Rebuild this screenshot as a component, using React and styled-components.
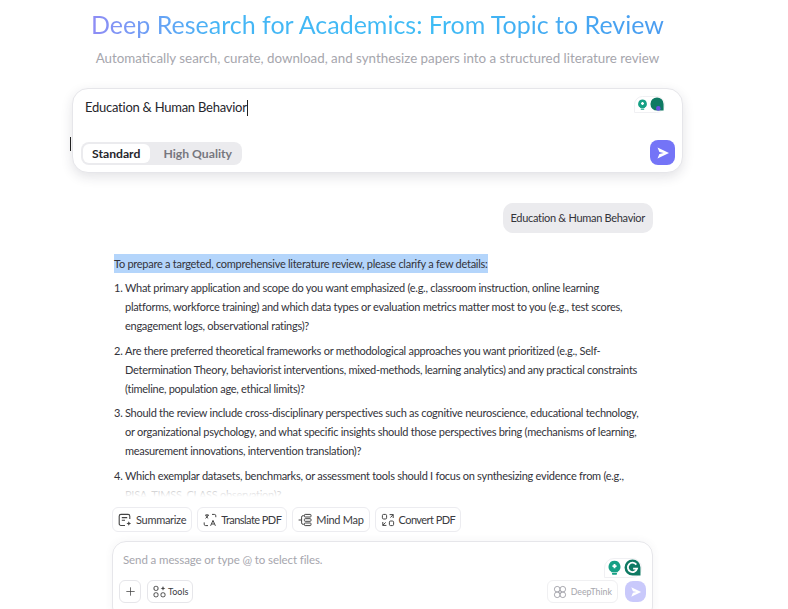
import React from 'react';
import styled, { createGlobalStyle } from 'styled-components';
import { Plus } from 'lucide-react';

const Global = createGlobalStyle`
  html, body { margin: 0; padding: 0; height: 100%; background: #fff; overflow: hidden; }
  body { font-family: Lato, "Open Sans", sans-serif; color: #2b2b33; }
`;

const questions = [
  [
    'What primary application and scope do you want emphasized (e.g., classroom instruction, online learning',
    'platforms, workforce training) and which data types or evaluation metrics matter most to you (e.g., test scores,',
    'engagement logs, observational ratings)?',
  ],
  [
    'Are there preferred theoretical frameworks or methodological approaches you want prioritized (e.g., Self-',
    'Determination Theory, behaviorist interventions, mixed-methods, learning analytics) and any practical constraints',
    '(timeline, population age, ethical limits)?',
  ],
  [
    'Should the review include cross-disciplinary perspectives such as cognitive neuroscience, educational technology,',
    'or organizational psychology, and what specific insights should those perspectives bring (mechanisms of learning,',
    'measurement innovations, intervention translation)?',
  ],
  [
    'Which exemplar datasets, benchmarks, or assessment tools should I focus on synthesizing evidence from (e.g.,',
    'PISA, TIMSS, CLASS observation)?',
  ],
];

const SendIcon = ({ size = 14 }) => (
  <svg width={size} height={size} viewBox="0 0 14 14">
    <path d="M1.5 1.6 L13 7 L1.5 12.4 L3.4 7.9 L7.6 7 L3.4 6.1 Z" fill="#fff" />
  </svg>
);

const BulbIcon = ({ size = 13 }) => (
  <svg width={size} height={size} viewBox="0 0 14 14">
    <path d="M7 .6a5.6 5.6 0 0 1 3 10.3v.5H4v-.5A5.6 5.6 0 0 1 7 .6Z" fill="#16a085" />
    <rect x="4.6" y="12" width="4.8" height="1.7" rx=".85" fill="#16a085" />
    <path d="M7 3.8v3.8M5.1 5.7h3.8" stroke="#fff" strokeWidth="1.7" />
  </svg>
);

const GrammarlyIcon = ({ size = 15, $plain }) => (
  <svg width={size} height={size} viewBox="0 0 16 16">
    <path d="M8 .5a7.5 7.5 0 0 1 7.5 7.5v7.5H8A7.5 7.5 0 0 1 8 .5Z" fill="#0f7a63" />
    {$plain
      ? <circle cx="9.5" cy="13" r="2.6" fill="#6a4fe0" />
      : <path d="M11.6 5.3A4.4 4.4 0 1 0 12.3 9H8.6" fill="none" stroke="#fff" strokeWidth="1.7" />}
  </svg>
);

const SummarizeIcon = () => (
  <svg width="14" height="14" viewBox="0 0 14 14" fill="none" stroke="#444" strokeWidth="1.1">
    <path d="M7 12.5H3a1.8 1.8 0 0 1-1.8-1.8V3.2A1.8 1.8 0 0 1 3 1.4h7a1.8 1.8 0 0 1 1.8 1.8V6" />
    <path d="M3.8 4.6h5.4M3.8 7.2h3.2" />
    <path d="M10.8 8.2l.7 1.6 1.6.7-1.6.7-.7 1.6-.7-1.6-1.6-.7 1.6-.7Z" fill="#444" stroke="none" />
  </svg>
);

const TranslateIcon = () => (
  <svg width="14" height="14" viewBox="0 0 14 14" fill="none" stroke="#444" strokeWidth="1">
    <path d="M2 2.2h4M4 1v1.2M2.6 5.4 5.4 2.4M2.8 3.2l2.4 2.2" />
    <path d="M9 1.4h2.4a1.4 1.4 0 0 1 1.4 1.4v1.4M5 12.6H2.6a1.4 1.4 0 0 1-1.4-1.4V9.4" />
    <path d="M7.6 12.8 10 7.4l2.4 5.4M8.6 11h2.8" />
  </svg>
);

const MindMapIcon = () => (
  <svg width="14" height="14" viewBox="0 0 14 14" fill="none" stroke="#444" strokeWidth="1">
    <rect x="6.4" y="1.4" width="6.6" height="2.6" rx=".8" />
    <rect x="6.4" y="5.7" width="6.6" height="2.6" rx=".8" />
    <rect x="6.4" y="10" width="6.6" height="2.6" rx=".8" />
    <path d="M.6 7h3M5.8 2.7H5A1.4 1.4 0 0 0 3.6 4.1v5.8A1.4 1.4 0 0 0 5 11.3h.8" />
  </svg>
);

const ConvertIcon = () => (
  <svg width="14" height="14" viewBox="0 0 14 14" fill="none" stroke="#444" strokeWidth="1">
    <rect x="1.4" y="1.4" width="4.2" height="4.6" rx="1.2" />
    <rect x="8.4" y="8" width="4.2" height="4.6" rx="1.2" />
    <path d="M8.6 1.6h3.6v3.4M12.2 1.6 9.4 4.6M5.4 12.4H1.8V9M1.8 12.4l2.8-3" />
  </svg>
);

const ToolsIcon = () => (
  <svg width="13" height="13" viewBox="0 0 13 13" fill="none" stroke="#444" strokeWidth="1">
    <rect x="1" y="1.4" width="4" height="4" rx="1.4" />
    <rect x="1" y="7.8" width="4" height="4" rx="1.4" />
    <rect x="8" y="7.8" width="4" height="4" rx="1.4" />
    <path d="M10 1l.7 1.7 1.7.7-1.7.7-.7 1.7-.7-1.7-1.7-.7 1.7-.7Z" fill="#444" stroke="none" />
  </svg>
);

const DeepThinkIcon = () => (
  <svg width="14" height="14" viewBox="0 0 14 14" fill="none" stroke="#a9a9b0" strokeWidth="1">
    <circle cx="4.2" cy="4.2" r="2.8" />
    <circle cx="9.8" cy="4.2" r="2.8" />
    <circle cx="4.2" cy="9.8" r="2.8" />
    <circle cx="9.8" cy="9.8" r="2.8" />
    <circle cx="7" cy="7" r="1.5" />
  </svg>
);

const Page = styled.div`
  position: relative;
  width: 788px;
  height: 609px;
  overflow: hidden;
  display: flex;
  flex-direction: column;
  align-items: center;
  padding: 7px 33px 0 0;
  box-sizing: border-box;
  background: #fff;
  & > * { flex-shrink: 0; }
`;

const Title = styled.h1`
  margin: 0;
  font-size: 25px;
  line-height: 34px;
  font-weight: 400;
  white-space: nowrap;
  background: linear-gradient(90deg, #8f8cf5 0%, #45b5f5 22%, #3fbcf5 60%, #4a9bf0 100%);
  -webkit-background-clip: text;
  background-clip: text;
  color: transparent;
`;

const Subtitle = styled.p`
  margin: 8px 0 0;
  font-size: 13.35px;
  line-height: 18px;
  color: #a6a6ad;
  white-space: nowrap;
`;

const Hero = styled.div`
  position: relative;
  width: 611px;
  height: 85px;
  margin-top: 21px;
  box-sizing: border-box;
  padding: 10px 7px 7px 12px;
  background: #fff;
  border: 1px solid #e6e6ea;
  border-radius: 16px;
  box-shadow: 0 4px 12px rgba(40, 40, 60, 0.13);
  display: flex;
  flex-direction: column;
  justify-content: space-between;
`;

const HeroText = styled.div`
  font-size: 13px;
  letter-spacing: -0.25px;
  line-height: 17px;
  color: #26262c;
  display: flex;
  align-items: center;
`;

const Caret = styled.span`
  width: 1px;
  height: 16px;
  background: #222;
`;

const HeroRow = styled.div`
  display: flex;
  align-items: flex-end;
  justify-content: space-between;
  margin-left: -4px;
`;

const Segments = styled.div`
  display: flex;
  padding: 2px;
  border-radius: 8px;
  background: #ebebee;
`;

const Segment = styled.div`
  padding: ${(p) => (p.$active ? '0 10px 0 9px' : '0 8px 0 13px')};
  height: 19px;
  line-height: 19px;
  font-size: 12.2px;
  font-weight: 700;
  border-radius: 6px;
  color: ${(p) => (p.$active ? '#26262c' : '#77777e')};
  background: ${(p) => (p.$active ? '#fff' : 'transparent')};
`;

const SendButton = styled.div`
  width: ${(p) => p.$size}px;
  height: ${(p) => p.$size}px;
  border-radius: 8px;
  display: flex;
  align-items: center;
  justify-content: center;
  background: ${(p) => p.$bg};
`;

const WidgetBadge = styled.div`
  position: absolute;
  top: ${(p) => p.$top}px;
  right: ${(p) => p.$right}px;
  display: flex;
  align-items: center;
  gap: 2px;
  padding: 0 0 1px 2px;
  background: #fff;
  border: 1px solid #f0f0f3;
  border-radius: 10px 10px 10px 0;
`;

const TextCursor = styled.div`
  position: absolute;
  left: 70px;
  top: 137px;
  width: 1px;
  height: 14px;
  background: #222;
`;

const Chat = styled.div`
  position: relative;
  width: 541px;
  height: 294px;
  margin: 30px 0 0 10px;
  overflow: hidden;
  display: flex;
  flex-direction: column;

  /* last line fades out above the chips */
  &::after {
    content: '';
    position: absolute;
    left: 0;
    right: 0;
    bottom: 0;
    height: 12px;
    background: linear-gradient(rgba(255, 255, 255, 0.55), #fff);
  }
`;

const Bubble = styled.div`
  align-self: flex-end;
  height: 30px;
  line-height: 30px;
  padding: 0 8px;
  font-size: 11px;
  letter-spacing: -0.3px;
  color: #33333a;
  background: #ebebee;
  border-radius: 10px;
  white-space: nowrap;
`;

const Answer = styled.div`
  margin: 21px 0 0 2px;
  font-size: 11px;
  letter-spacing: -0.27px;
  color: #33333a;
`;

const Intro = styled.div`
  display: inline-block;
  line-height: 19px;
  background: #b4d5fb;
  white-space: nowrap;
`;

const List = styled.ol`
  list-style: none;
  margin: 5px 0 0;
  padding: 0;
`;

const Item = styled.li`
  position: relative;
  padding-left: 11px;
  margin-bottom: 5.5px;
`;

const Num = styled.span`
  position: absolute;
  left: 0;
  top: 0;
  line-height: 19px;
`;

const Line = styled.div`
  line-height: 19px;
  white-space: nowrap;
`;

const Chips = styled.div`
  align-self: flex-start;
  display: flex;
  gap: 5px;
  margin: 10px 0 0 112px;
`;

const Chip = styled.div`
  height: 25px;
  padding: 0 5px;
  display: flex;
  align-items: center;
  gap: 4px;
  box-sizing: border-box;
  border: 1px solid #ececf0;
  border-radius: 6px;
  font-size: 11px;
  letter-spacing: ${(p) => (p.$tight ? '-0.55px' : '-0.3px')};
  color: #3b3b42;
  white-space: nowrap;
`;

const Composer = styled.div`
  position: relative;
  width: 541px;
  height: 80px;
  margin: 9px 0 0 10px;
  box-sizing: border-box;
  padding: 11px 6px 0 10px;
  border: 1px solid #e6e6ea;
  border-radius: 14px;
  box-shadow: 0 0 8px rgba(60, 60, 90, 0.06);
`;

const Placeholder = styled.div`
  font-size: 11.5px;
  letter-spacing: -0.1px;
  line-height: 14px;
  color: #a6a6ad;
`;

const ComposerRow = styled.div`
  display: flex;
  align-items: center;
  margin: 13px 0 0 -4px;
`;

const IconBox = styled.div`
  width: 20px;
  height: 21px;
  display: flex;
  align-items: center;
  justify-content: center;
  border: 1px solid #e6e6ea;
  border-radius: 6px;
  color: #444;
`;

const ToolsChip = styled.div`
  height: 21px;
  margin-left: 6px;
  padding: 0 4px 0 5px;
  display: flex;
  align-items: center;
  gap: 2px;
  border: 1px solid #e6e6ea;
  border-radius: 6px;
  font-size: 9px;
  color: #3b3b42;
`;

const DeepThink = styled.div`
  height: 21px;
  margin-left: auto;
  padding: 0 5px;
  display: flex;
  align-items: center;
  gap: 4px;
  border: 1px solid #f0f0f2;
  border-radius: 6px;
  font-size: 8.8px;
  color: #a6a6ad;
`;

const ComposerSend = styled(SendButton)`
  margin-left: 7px;
`;

export default function App() {
  return (
    <Page>
      <Global />
      <Title>Deep Research for Academics: From Topic to Review</Title>
      <Subtitle>Automatically search, curate, download, and synthesize papers into a structured literature review</Subtitle>
      <Hero>
        <HeroText>Education &amp; Human Behavior<Caret /></HeroText>
        <WidgetBadge $top={7} $right={17}><BulbIcon size={11} /><GrammarlyIcon size={14} $plain /></WidgetBadge>
        <HeroRow>
          <Segments>
            <Segment $active>Standard</Segment>
            <Segment>High Quality</Segment>
          </Segments>
          <SendButton $size={25} $bg="#7474f7"><SendIcon /></SendButton>
        </HeroRow>
      </Hero>
      <TextCursor />
      <Chat>
        <Bubble>Education &amp; Human Behavior</Bubble>
        <Answer>
          <Intro>To prepare a targeted, comprehensive literature review, please clarify a few details:</Intro>
          <List>
            {questions.map((lines, i) => (
              <Item key={i}>
                <Num>{i + 1}.</Num>
                {lines.map((text) => <Line key={text}>{text}</Line>)}
              </Item>
            ))}
          </List>
        </Answer>
      </Chat>
      <Chips>
        <Chip><SummarizeIcon />Summarize</Chip>
        <Chip $tight><TranslateIcon />Translate PDF</Chip>
        <Chip><MindMapIcon />Mind Map</Chip>
        <Chip $tight><ConvertIcon />Convert PDF</Chip>
      </Chips>
      <Composer>
        <Placeholder>Send a message or type @ to select files.</Placeholder>
        <WidgetBadge $top={16} $right={10}><BulbIcon size={15} /><GrammarlyIcon size={17} /></WidgetBadge>
        <ComposerRow>
          <IconBox><Plus size={13} strokeWidth={1.4} /></IconBox>
          <ToolsChip><ToolsIcon />Tools</ToolsChip>
          <DeepThink><DeepThinkIcon />DeepThink</DeepThink>
          <ComposerSend $size={21} $bg="#c9c9fb"><SendIcon size={12} /></ComposerSend>
        </ComposerRow>
      </Composer>
    </Page>
  );
}
